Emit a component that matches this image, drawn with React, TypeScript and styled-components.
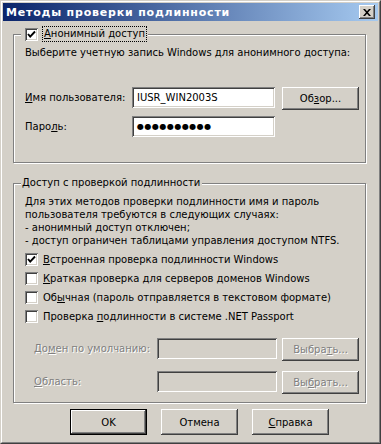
import React from "react";
import styled, { createGlobalStyle, css } from "styled-components";

const GlobalStyle = createGlobalStyle`
    html, body {
        margin: 0;
        padding: 0;
        background: #d4d0c8;
    }
    body {
        font-family: "DejaVu Sans", "Liberation Sans", sans-serif;
        font-size: 10px;
        color: #000;
    }
`;

const raised = css`
    box-shadow: inset -1px -1px #404040, inset 1px 1px #fff,
        inset -2px -2px #808080, inset 2px 2px #d4d0c8;
`;

const sunken = css`
    box-shadow: inset 1px 1px #808080, inset -1px -1px #fff,
        inset 2px 2px #404040, inset -2px -2px #d4d0c8;
`;

const Check = () => (
    <svg width="13" height="13" viewBox="0 0 13 13">
        <polyline
            points="3,6 5.2,8.6 10,3.5"
            fill="none"
            stroke="#000"
            strokeWidth="1.9"
        />
    </svg>
);

function CheckBox({ checked }: { checked?: boolean }) {
    return <Box>{checked ? <Check /> : null}</Box>;
}

export default function App() {
    return (
        <>
            <GlobalStyle />
            <Window>
                <Frame>
                    <TitleBar>
                        <TitleText>Методы проверки подлинности</TitleText>
                        <CloseButton>
                            <svg width="8" height="7" viewBox="0 0 8 7">
                                <path
                                    d="M0 0h2l2 2.2L6 0h2L5 3.5 8 7H6L4 4.8 2 7H0l3-3.5z"
                                    fill="#000"
                                />
                            </svg>
                        </CloseButton>
                    </TitleBar>
                    <Body>
                        <GroupBox $pad="5px 6px 25px 11px">
                            <Legend $indent={4}>
                                <CheckBox checked />
                                <Focused>
                                    <u>А</u>нонимный доступ
                                </Focused>
                            </Legend>
                            <Text>
                                Выберите учетную запись Windows для анонимного
                                доступа:
                            </Text>
                            <FieldRow $label={107} $input={143} $top={28}>
                                <Label>
                                    <u>И</u>мя пользователя:
                                </Label>
                                <Field>IUSR_WIN2003S</Field>
                                <Button>
                                    Об<u>з</u>ор...
                                </Button>
                            </FieldRow>
                            <FieldRow $label={107} $input={143} $top={6}>
                                <Label>
                                    Паро<u>л</u>ь:
                                </Label>
                                <Field $dots>●●●●●●●●●●</Field>
                            </FieldRow>
                        </GroupBox>

                        <GroupBox $pad="5px 6px 8px 11px" $top={13}>
                            <Legend $indent={1}>
                                Доступ с проверкой подлинности
                            </Legend>
                            <Text>
                                Для этих методов проверки подлинности имя и
                                пароль
                                <br />
                                пользователя требуются в следующих случаях:
                                <br />- анонимный доступ отключен;
                                <br />- доступ ограничен таблицами управления
                                доступом NTFS.
                            </Text>
                            <CheckList>
                                <CheckRow>
                                    <CheckBox checked />
                                    <span>
                                        <u>В</u>строенная проверка подлинности
                                        Windows
                                    </span>
                                </CheckRow>
                                <CheckRow>
                                    <CheckBox />
                                    <span>
                                        <u>К</u>раткая проверка для серверов
                                        доменов Windows
                                    </span>
                                </CheckRow>
                                <CheckRow>
                                    <CheckBox />
                                    <span>
                                        Об<u>ы</u>чная (пароль отправляется в
                                        текстовом формате)
                                    </span>
                                </CheckRow>
                                <CheckRow>
                                    <CheckBox />
                                    <span>
                                        Проверка <u>п</u>одлинности в системе
                                        .NET Passport
                                    </span>
                                </CheckRow>
                            </CheckList>
                            <FieldRow
                                $label={123}
                                $input={120}
                                $top={12}
                                $indent={9}
                            >
                                <Label $disabled>
                                    До<u>м</u>ен по умолчанию:
                                </Label>
                                <Field $disabled />
                                <Button $disabled>
                                    Выбра<u>т</u>ь...
                                </Button>
                            </FieldRow>
                            <FieldRow
                                $label={123}
                                $input={120}
                                $top={10}
                                $indent={9}
                            >
                                <Label $disabled>
                                    <u>О</u>бласть:
                                </Label>
                                <Field $disabled />
                                <Button $disabled>
                                    Вы<u>б</u>рать...
                                </Button>
                            </FieldRow>
                        </GroupBox>

                        <ButtonBar>
                            <Button $h={26} $default>
                                OK
                            </Button>
                            <Button $h={26}>Отмена</Button>
                            <Button $h={26}>
                                <u>С</u>правка
                            </Button>
                        </ButtonBar>
                    </Body>
                </Frame>
            </Window>
        </>
    );
}

const Window = styled.div`
    width: 381px;
    height: 444px;
    box-sizing: border-box;
    border: 1px solid;
    border-color: #d4d0c8 #404040 #404040 #d4d0c8;
    display: flex;
    flex-direction: column;
`;

const Frame = styled.div`
    flex: 1;
    border: 1px solid;
    border-color: #fff #808080 #808080 #fff;
    padding: 1px;
    display: flex;
    flex-direction: column;
`;

const TitleBar = styled.div`
    height: 18px;
    background: linear-gradient(to right, #0a246a, #a6caf0);
    display: flex;
    align-items: center;
    justify-content: space-between;
    padding: 0 3px 0 3px;
`;

const TitleText = styled.span`
    color: #fff;
    font-weight: bold;
    font-size: 11px;
    letter-spacing: 0.8px;
`;

const CloseButton = styled.div`
    width: 16px;
    height: 14px;
    background: #d4d0c8;
    ${raised};
    display: flex;
    align-items: center;
    justify-content: center;
`;

const Body = styled.div`
    flex: 1;
    padding: 6px 12px 0 10px;
    display: flex;
    flex-direction: column;
`;

const GroupBox = styled.fieldset<{ $pad: string; $top?: number }>`
    margin: ${(p) => p.$top ?? 0}px 0 0 0;
    padding: ${(p) => p.$pad};
    min-width: 0;
    border: 1px solid #808080;
    box-shadow: 1px 1px 0 #fff, inset 1px 1px 0 #fff;
`;

const Legend = styled.legend<{ $indent: number }>`
    margin-left: -4px;
    padding: 0 2px 0 ${(p) => p.$indent}px;
    background: #d4d0c8;
    line-height: 14px;
    display: flex;
    align-items: center;
    gap: 5px;
`;

const Focused = styled.span`
    outline: 1px dotted #000;
    padding: 0 1px;
`;

const Text = styled.div`
    line-height: 13px;
`;

const FieldRow = styled.div<{
    $label: number;
    $input: number;
    $top: number;
    $indent?: number;
}>`
    display: grid;
    grid-template-columns: ${(p) => p.$label}px ${(p) => p.$input}px 1fr;
    align-items: start;
    margin-top: ${(p) => p.$top}px;
    padding-left: ${(p) => p.$indent ?? 0}px;
`;

const Label = styled.span<{ $disabled?: boolean }>`
    line-height: 21px;
    white-space: nowrap;
    ${(p) =>
        p.$disabled &&
        css`
            color: #808080;
            text-shadow: 1px 1px 0 #fff;
        `}
`;

const Field = styled.div<{ $disabled?: boolean; $dots?: boolean }>`
    height: 21px;
    box-sizing: border-box;
    padding: 0 5px;
    line-height: 21px;
    background: ${(p) => (p.$disabled ? "#d4d0c8" : "#fff")};
    ${sunken};
    ${(p) =>
        p.$dots &&
        css`
            font-size: 8px;
            letter-spacing: 0.5px;
        `}
`;

const Button = styled.div<{ $h?: number; $default?: boolean; $disabled?: boolean }>`
    justify-self: end;
    width: 77px;
    height: ${(p) => p.$h ?? 23}px;
    box-sizing: border-box;
    display: flex;
    align-items: center;
    justify-content: center;
    background: #d4d0c8;
    ${raised};
    ${(p) =>
        p.$default &&
        css`
            border: 1px solid #000;
        `}
    ${(p) =>
        p.$disabled &&
        css`
            color: #808080;
            text-shadow: 1px 1px 0 #fff;
        `}
`;

const CheckList = styled.div`
    margin-top: 3px;
    display: flex;
    flex-direction: column;
`;

const CheckRow = styled.div`
    height: 19px;
    display: flex;
    align-items: center;
    gap: 5px;
`;

const Box = styled.span`
    width: 13px;
    height: 13px;
    flex: none;
    background: #fff;
    ${sunken};
    display: flex;
`;

const ButtonBar = styled.div`
    margin-top: 6px;
    padding-left: 57px;
    display: flex;
    gap: 14px;
`;
